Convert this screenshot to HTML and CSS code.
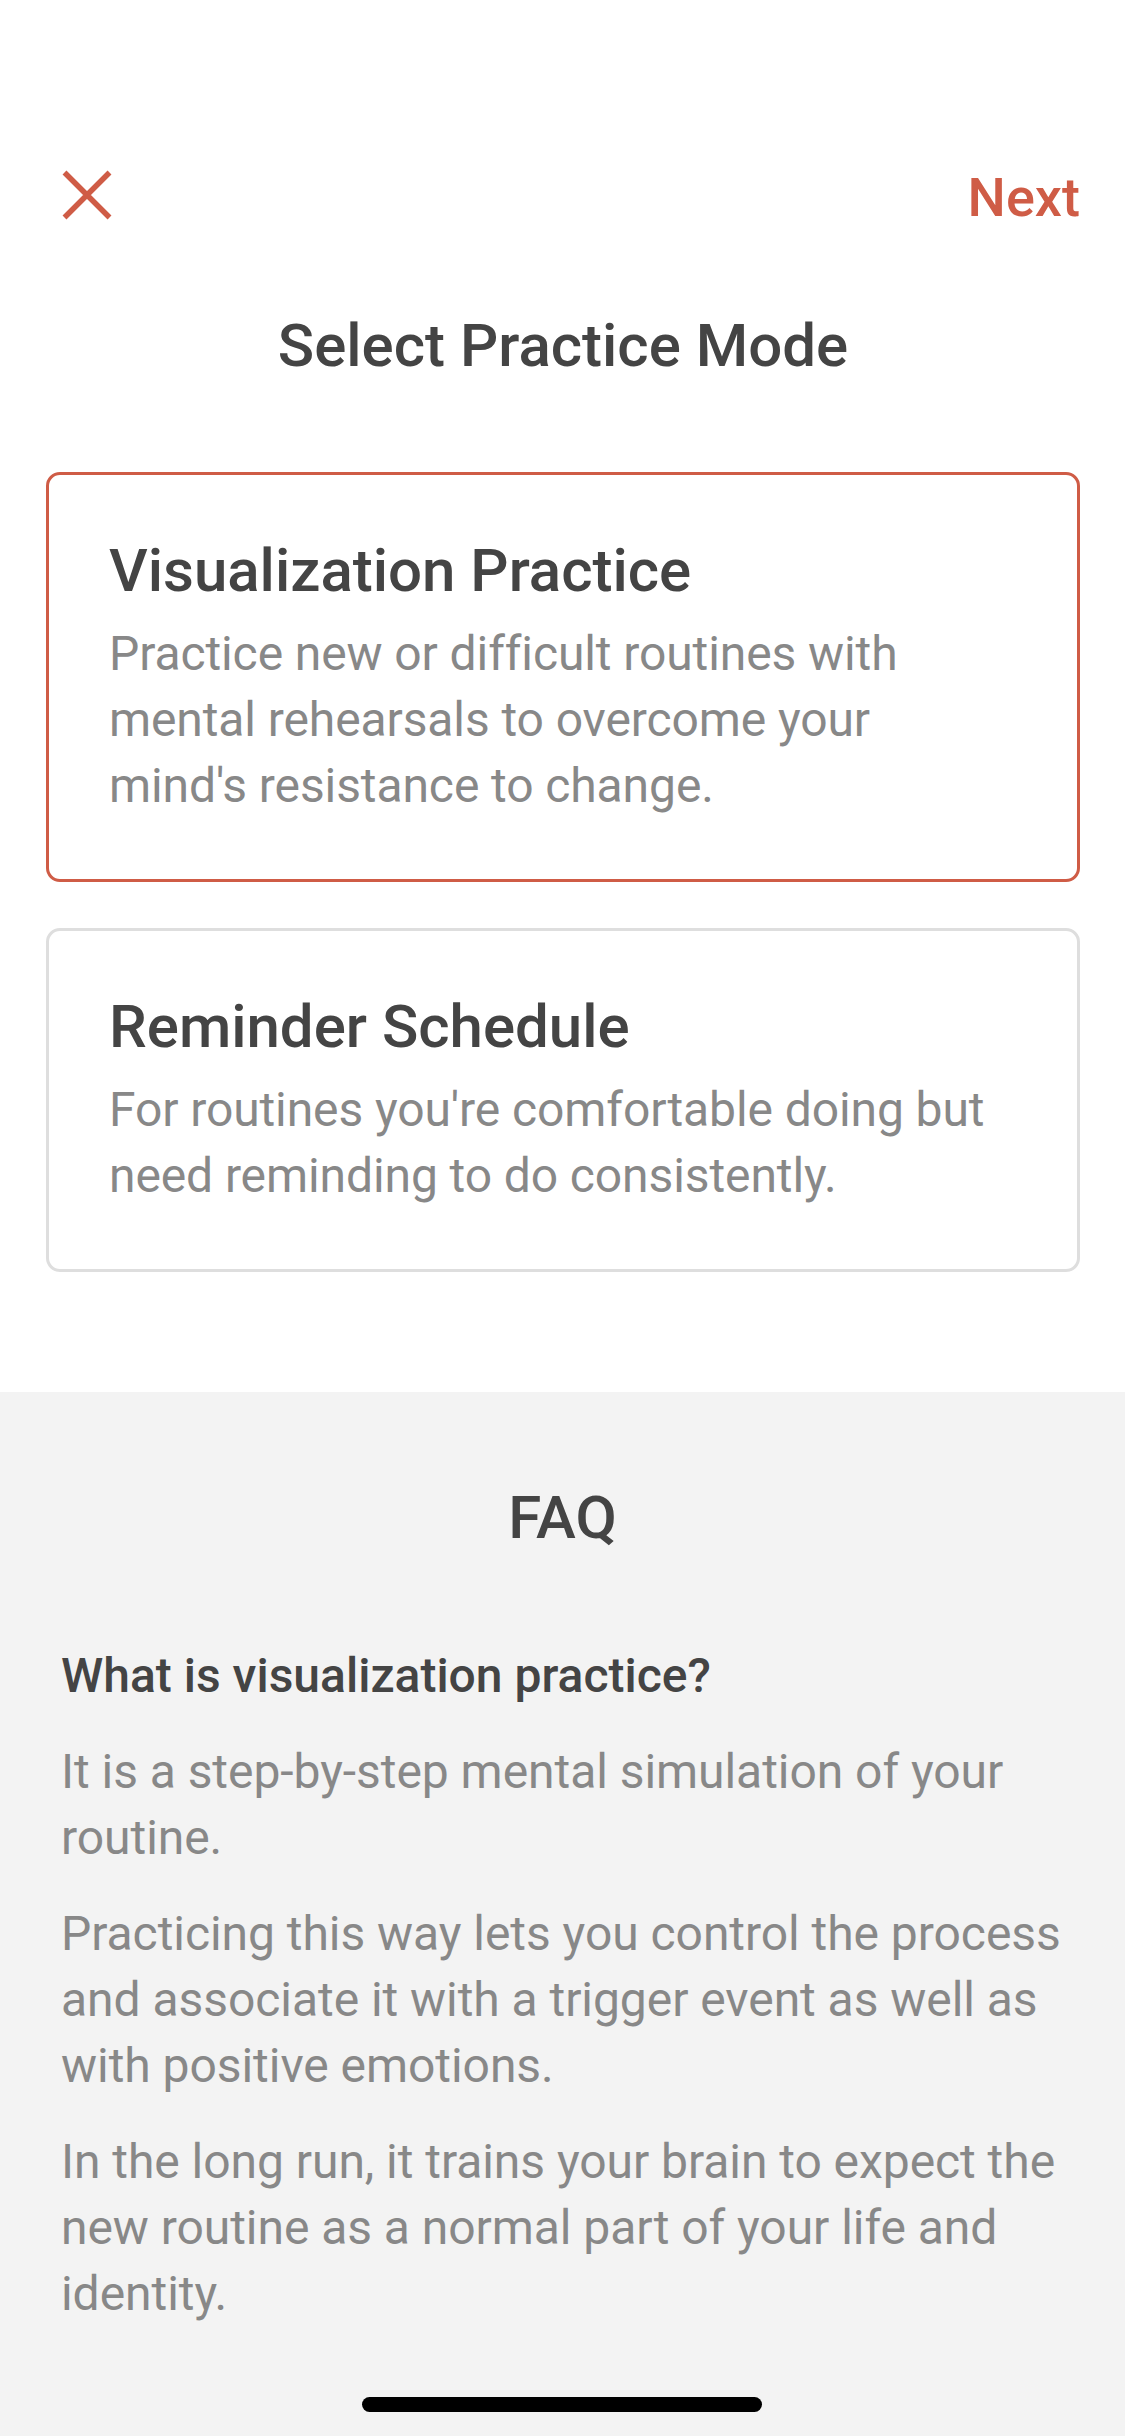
FILE: index.html
```html
<!DOCTYPE html>
<html lang="en">
<head>
<meta charset="utf-8">
<title>Select Practice Mode</title>
<link rel="stylesheet" href="styles.css">
</head>
<body>
<div class="page">
  <section class="top">
    <header class="nav">
      <button class="close" aria-label="Close">
        <svg viewBox="0 0 50 50" width="50" height="50"><path d="M2.5 2.5 L47.5 47.5 M47.5 2.5 L2.5 47.5" stroke="#cf5c46" stroke-width="5.5" fill="none"/></svg>
      </button>
      <span class="next">Next</span>
    </header>
    <h1 class="title">Select Practice Mode</h1>
    <div class="cards">
      <div class="card selected">
        <h2 class="card-title">Visualization Practice</h2>
        <p class="card-desc">Practice new or difficult routines with mental rehearsals to overcome your mind's resistance to change.</p>
      </div>
      <div class="card">
        <h2 class="card-title">Reminder Schedule</h2>
        <p class="card-desc">For routines you're comfortable doing but need reminding to do consistently.</p>
      </div>
    </div>
  </section>
  <section class="faq">
    <h2 class="faq-title">FAQ</h2>
    <h3 class="faq-q">What is visualization practice?</h3>
    <p class="faq-a">It is a step-by-step mental simulation of your routine.</p>
    <p class="faq-a">Practicing this way lets you control the process and associate it with a trigger event as well as with positive emotions.</p>
    <p class="faq-a">In the long run, it trains your brain to expect the new routine as a normal part of your life and identity.</p>
  </section>
  <div class="home-indicator"></div>
</div>
</body>
</html>
```
FILE: styles.css
```css
* { box-sizing: border-box; }
html, body { margin: 0; padding: 0; }
body {
  font-family: Roboto, "Noto Sans", "Liberation Sans", sans-serif;
  background: #ffffff;
  color: #444444;
}
.page {
  position: relative;
  min-height: 2436px;
  display: flex;
  flex-direction: column;
}
.top {
  padding: 170px 45px 120px 46px;
}
.nav {
  display: flex;
  justify-content: space-between;
  align-items: center;
  height: 50px;
  padding-left: 16px;
}
.close {
  width: 50px;
  height: 50px;
  padding: 0;
  border: 0;
  background: none;
  display: block;
}
.close svg { display: block; }
.next {
  font-size: 54px;
  font-weight: 500;
  color: #cf5c46;
  line-height: 1;
  margin-top: 6px;
}
.title {
  margin: 90px 0 0;
  font-size: 60px;
  line-height: 72px;
  font-weight: 500;
  text-align: center;
  color: #444444;
}
.cards {
  margin-top: 90px;
  display: flex;
  flex-direction: column;
  gap: 46px;
}
.card {
  border: 3px solid #dedede;
  border-radius: 14px;
  padding: 60px;
  background: #ffffff;
}
.card.selected { border-color: #cf5c46; }
.card-title {
  margin: 0;
  font-size: 60px;
  line-height: 72px;
  font-weight: 500;
  color: #444444;
}
.card-desc {
  margin: 14px 0 0;
  font-size: 48px;
  line-height: 66px;
  font-weight: 400;
  color: #888888;
  letter-spacing: -0.1px;
}
.faq {
  flex: 1;
  background: #f3f3f3;
  padding: 90px 46px 100px 61px;
}
.faq-title {
  margin: 0;
  font-size: 60px;
  line-height: 72px;
  font-weight: 500;
  text-align: center;
  color: #444444;
  padding-right: 15px;
}
.faq-q {
  margin: 89px 0 0;
  font-size: 48px;
  line-height: 66px;
  font-weight: 500;
  color: #444444;
}
.faq-a {
  margin: 30px 0 0;
  font-size: 48px;
  line-height: 66px;
  font-weight: 400;
  color: #888888;
  letter-spacing: -0.05px;
}
.home-indicator {
  position: absolute;
  left: 362px;
  bottom: 24px;
  width: 400px;
  height: 15px;
  border-radius: 8px;
  background: #000000;
}
```
